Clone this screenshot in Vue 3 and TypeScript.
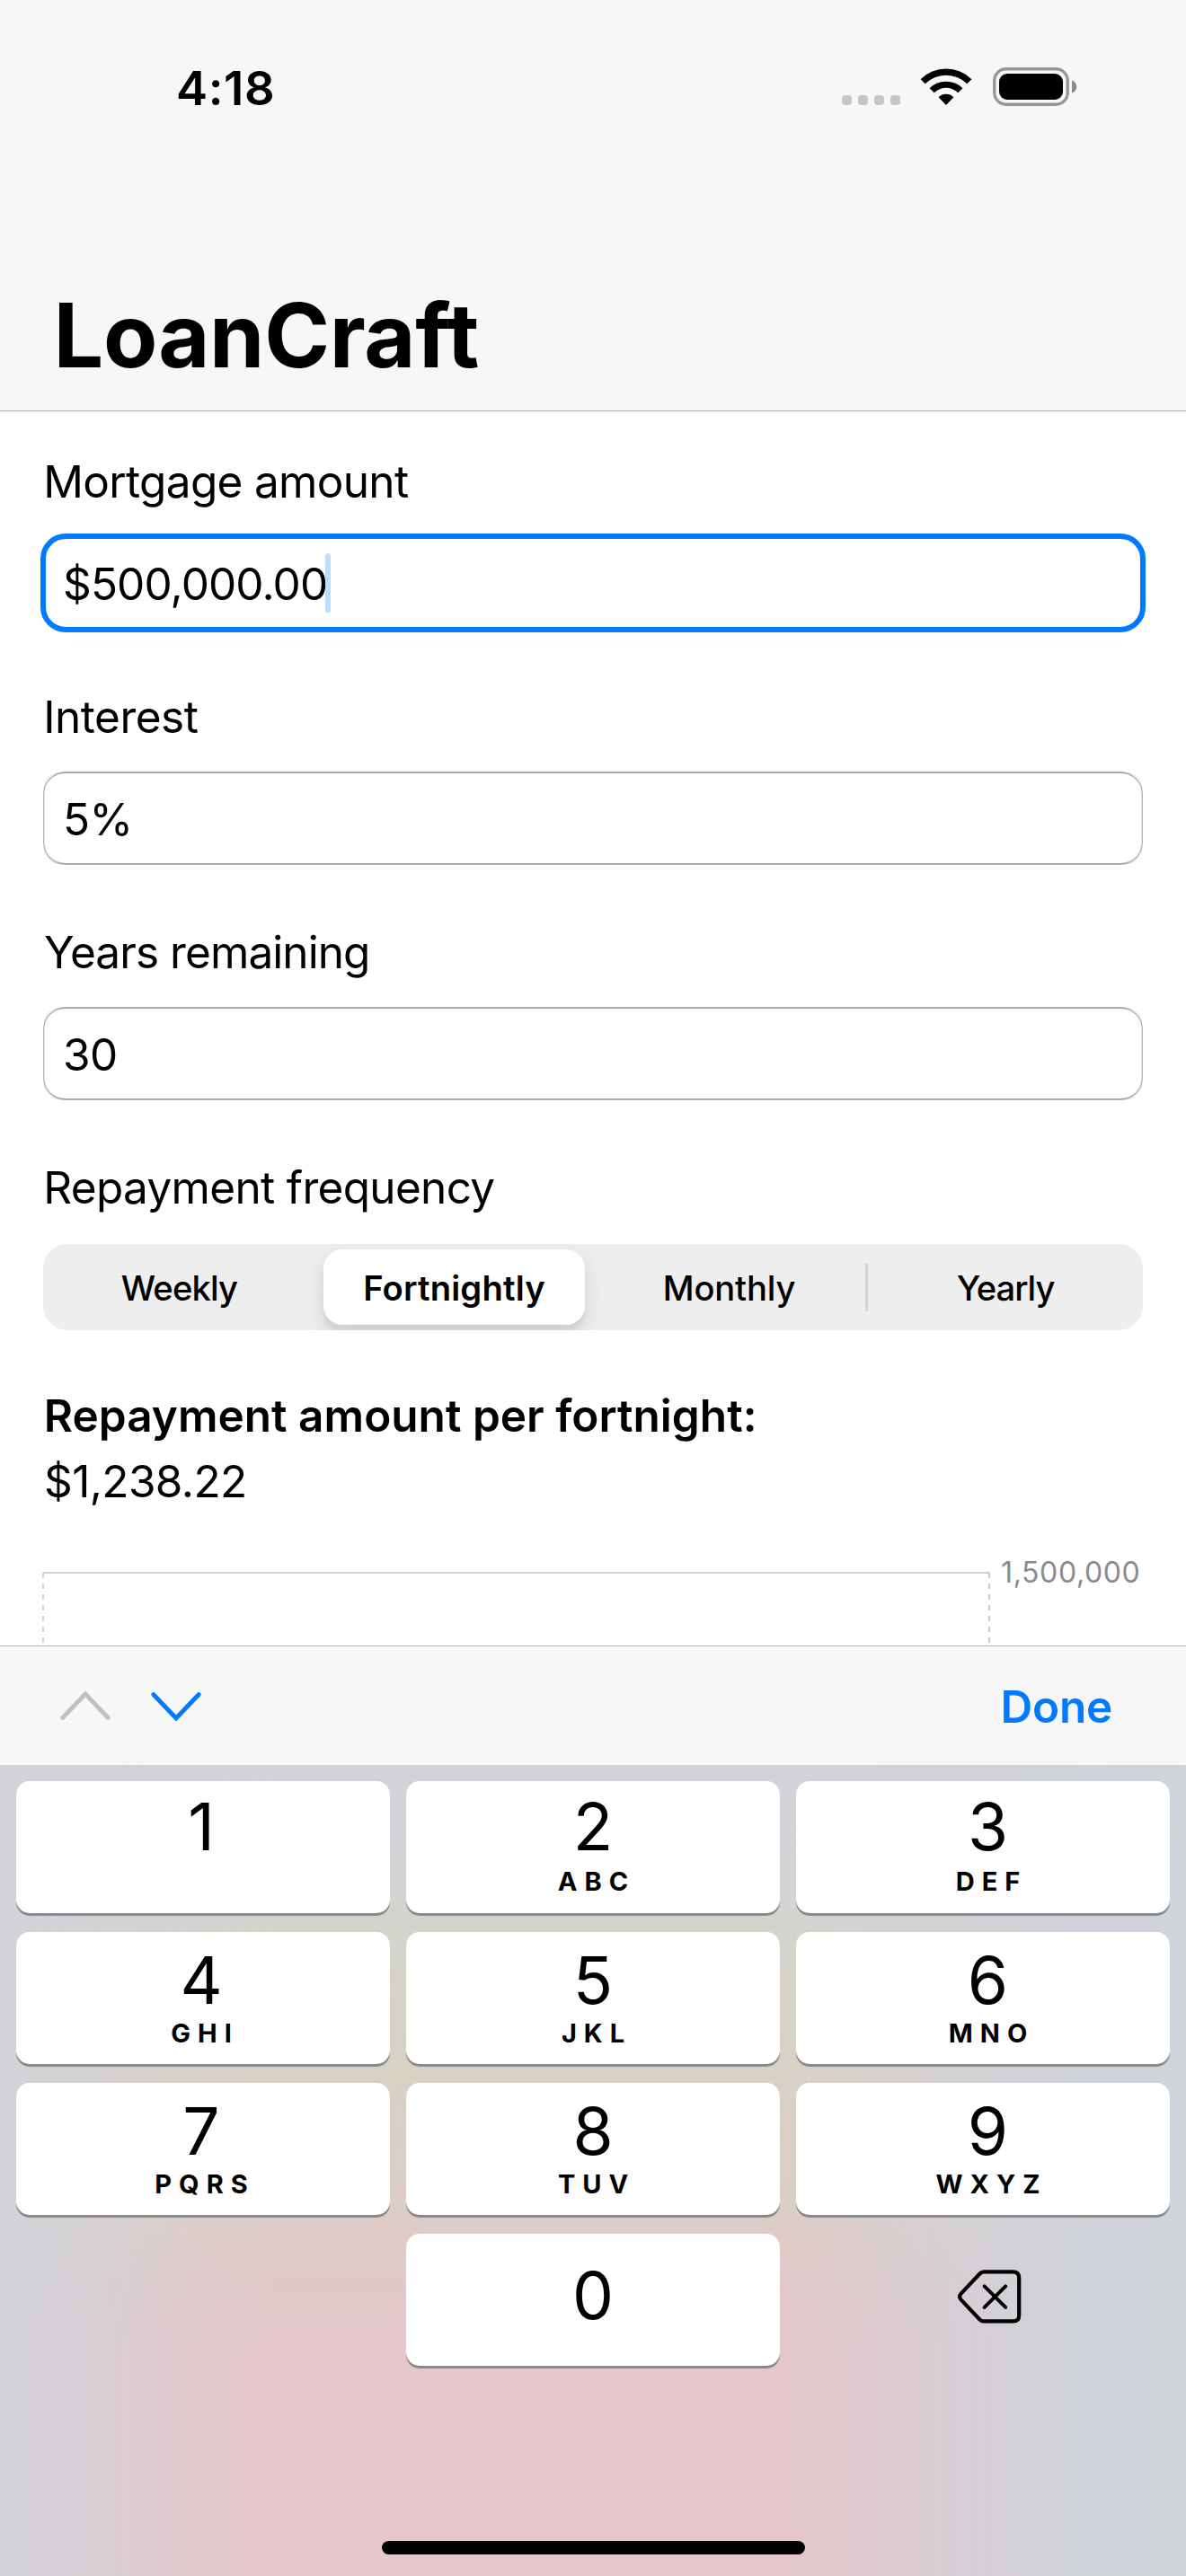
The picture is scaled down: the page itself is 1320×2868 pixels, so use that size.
<script setup lang="ts">
interface Field {
  id: string
  label: string
  value: string
  focused: boolean
}

interface Key {
  digit: string
  letters: string
}

const fields: Field[] = [
  { id: 'amount', label: 'Mortgage amount', value: '$500,000.00', focused: true },
  { id: 'interest', label: 'Interest', value: '5%', focused: false },
  { id: 'years', label: 'Years remaining', value: '30', focused: false },
]

const frequencies: string[] = ['Weekly', 'Fortnightly', 'Monthly', 'Yearly']
const selected = 'Fortnightly'

const keys: Key[] = [
  { digit: '1', letters: '' },
  { digit: '2', letters: 'ABC' },
  { digit: '3', letters: 'DEF' },
  { digit: '4', letters: 'GHI' },
  { digit: '5', letters: 'JKL' },
  { digit: '6', letters: 'MNO' },
  { digit: '7', letters: 'PQRS' },
  { digit: '8', letters: 'TUV' },
  { digit: '9', letters: 'WXYZ' },
]
</script>

<template>
  <div class="screen">
    <header class="header">
      <div class="status">
        <span class="time">4:18</span>
        <div class="indicators">
          <div class="dots"><i v-for="n in 4" :key="n"></i></div>
          <svg class="wifi" width="58" height="43" viewBox="0 0 58 43">
            <path d="M0.6 13.2 A40.5 40.5 0 0 1 57.4 13.2 L52.4 18.3 A33.2 33.2 0 0 0 5.6 18.3 Z" />
            <path d="M10.6 23.2 A26.2 26.2 0 0 1 47.4 23.2 L42.3 28.3 A19 19 0 0 0 15.7 28.3 Z" />
            <path d="M20.6 33.3 A12 12 0 0 1 37.4 33.3 L29 42 Z" />
          </svg>
          <svg class="battery" width="94" height="44" viewBox="0 0 94 44">
            <rect x="1.75" y="1.75" width="81.5" height="39.5" rx="13" fill="none" stroke="#969696" stroke-width="3.3" />
            <rect x="7" y="7" width="71" height="29" rx="9" />
            <path d="M88 14.5 C91.5 15.5 93.2 18.5 93.2 21.6 C93.2 24.8 91.5 27.6 88 28.6 Z" fill="#8a8a8a" />
          </svg>
        </div>
      </div>
      <h1 class="title">LoanCraft</h1>
    </header>

    <main class="content">
      <section v-for="f in fields" :key="f.id" class="group" :class="f.id">
        <label class="label">{{ f.label }}</label>
        <div class="field" :class="{ focused: f.focused }">
          <span class="value">{{ f.value }}</span>
          <span v-if="f.focused" class="caret"></span>
        </div>
      </section>

      <section class="frequency">
        <div class="label">Repayment frequency</div>
        <div class="segmented">
          <div
            v-for="q in frequencies"
            :key="q"
            class="segment"
            :class="[q.toLowerCase(), { selected: q === selected }]"
          >
            <span>{{ q }}</span>
          </div>
        </div>
      </section>

      <section class="result">
        <div class="result-title">Repayment amount per fortnight:</div>
        <div class="result-value">$1,238.22</div>
      </section>

      <section class="chart">
        <svg width="1056" height="82" viewBox="0 0 1056 82">
          <path d="M1 1 H1054" stroke="#d0d0d0" stroke-width="2" />
          <path d="M1 1 V79" stroke="#c8c8c8" stroke-width="1.6" stroke-dasharray="6 6" />
          <path d="M1054 1 V79" stroke="#c8c8c8" stroke-width="2" stroke-dasharray="6 6" />
        </svg>
        <span class="axis">1,500,000</span>
      </section>
    </main>

    <div class="toolbar">
      <div class="arrows">
        <svg width="58" height="36" viewBox="0 0 58 36" fill="none" stroke="#c1c1c1" stroke-width="4.8" stroke-linecap="round">
          <path d="M3.7 31.5 L29 5 L54.3 31.5" />
        </svg>
        <svg width="58" height="36" viewBox="0 0 58 36" fill="none" stroke="#007aff" stroke-width="4.8" stroke-linecap="round">
          <path d="M3.7 5.5 L29 32 L54.3 5.5" />
        </svg>
      </div>
      <span class="done">Done</span>
    </div>

    <div class="keyboard">
      <div class="glow"></div>
      <div class="keys">
        <div v-for="k in keys" :key="k.digit" class="key" :class="{ first: k.digit < '4' }">
          <span class="digit">{{ k.digit }}</span>
          <span class="letters">{{ k.letters }}</span>
        </div>
        <div></div>
        <div class="key zero"><span class="digit">0</span></div>
        <div class="delete">
          <svg width="72" height="62" viewBox="0 0 72 62" fill="none" stroke="#000" stroke-linecap="round" stroke-linejoin="round">
            <path
              d="M30 3.4 H62.5 Q69.2 3.4 69.2 10 V52 Q69.2 58.4 62.5 58.4 H30 Q27.3 58.4 25.2 56.2 L4.6 34.4 Q1.6 31 4.6 27.6 L25.2 5.7 Q27.3 3.4 30 3.4 Z"
              stroke-width="4.2"
            />
            <path d="M30.6 19.3 L54.2 42.8 M54.2 19.3 L30.6 42.8" stroke-width="4" />
          </svg>
        </div>
      </div>
      <div class="home"></div>
    </div>
  </div>
</template>

<style>
body {
  background: #fff;
}
</style>

<style scoped>
.screen {
  width: 1320px;
  height: 2868px;
  overflow: hidden;
  display: flex;
  flex-direction: column;
  background: #fff;
  color: #000;
  font-family: Inter, 'Liberation Sans', sans-serif;
  font-size: 49.5px;
  white-space: nowrap;
}
.screen * {
  box-sizing: border-box;
}

/* Header */
.header {
  height: 458px;
  flex: none;
  background: #f7f7f7;
  border-bottom: 1px solid #b2b2b2;
}
.status {
  height: 196px;
  padding: 0 121px 0 196px;
  display: flex;
  align-items: center;
  justify-content: space-between;
}
.time {
  font-size: 52.7px;
  font-weight: 600;
  letter-spacing: 0.6px;
  line-height: 60px;
}
.indicators {
  display: flex;
  align-items: flex-start;
  height: 46px;
}
.dots {
  display: flex;
  gap: 7px;
  margin: 31px 22px 0 0;
}
.dots i {
  width: 11px;
  height: 11px;
  border-radius: 4px;
  background: #c6c6c6;
}
.wifi {
  margin-right: 23px;
}
.title {
  margin: 117px 0 0 59.6px;
  font-size: 98.6px;
  font-weight: 700;
  line-height: 120px;
  letter-spacing: -0.3px;
}

/* Form */
.content {
  height: 1374px;
  flex: none;
  padding: 48px 48px 0;
  overflow: hidden;
}
.label {
  display: block;
  height: 60px;
  line-height: 60px;
  margin-left: 0.3px;
  letter-spacing: -0.68px;
}
.interest .label {
  letter-spacing: -0.5px;
}
.years .label {
  margin-left: 1px;
  letter-spacing: -0.92px;
}
.field {
  position: relative;
  height: 104px;
  margin: 31px 0 67px;
  padding: 2px 0 0 21px;
  border-style: solid;
  border-color: #b3b3b5;
  border-width: 2px 1px;
  border-radius: 25px;
  display: flex;
  align-items: center;
}
.field:not(.focused)::before {
  content: '';
  position: absolute;
  inset: -1px 0;
  border: 1px solid rgba(0, 0, 0, 0.1);
  border-radius: 17px;
}
.field.focused {
  height: 110px;
  margin: 28px -3px 64px;
  padding-left: 19px;
  border: 6px solid #007aff;
  border-radius: 28px;
}
.value {
  line-height: 60px;
  letter-spacing: -0.5px;
}
.focused .value {
  letter-spacing: -0.88px;
}
.caret {
  width: 6px;
  height: 66px;
  margin: -3px 0 0 -2px;
  border-radius: 3px;
  background: #bdddff;
}
.segmented {
  height: 96px;
  margin-top: 33px;
  border-radius: 27px;
  background: #eeeeef;
  display: grid;
  grid-template-columns: repeat(4, 1fr);
  overflow: hidden;
}
.segment {
  padding: 0 3px 0 0;
  display: flex;
  align-items: center;
  justify-content: center;
  font-size: 38.2px;
  line-height: 50px;
  font-weight: 450;
  letter-spacing: -0.2px;
}
.segment span {
  padding-top: 1px;
}
.segment.weekly {
  letter-spacing: -0.85px;
}
.segment.selected {
  margin: 6px 9px 6px 6px;
  padding: 0;
  border-radius: 21px;
  background: #fff;
  font-weight: 600;
  letter-spacing: 0.17px;
  box-shadow: 0 9px 24px rgba(0, 0, 0, 0.12), 0 9px 3px rgba(0, 0, 0, 0.04);
}
.segment.yearly {
  position: relative;
  padding: 0;
  letter-spacing: -1.04px;
}
.segment.yearly::before {
  content: '';
  position: absolute;
  left: -3px;
  top: 21px;
  width: 3px;
  height: 54px;
  border-radius: 2px;
  background: #d5d5d6;
}
.result {
  padding-top: 65px;
}
.result-title {
  height: 60px;
  line-height: 60px;
  margin-left: 0.8px;
  font-weight: 600;
  letter-spacing: 0.02px;
}
.result-value {
  height: 60px;
  line-height: 60px;
  margin: 13px 0 0 1px;
  letter-spacing: -0.61px;
}
.chart {
  margin-top: 71px;
  display: flex;
  align-items: flex-start;
}
.chart svg {
  flex: none;
  margin-left: -1px;
}
.axis {
  margin: -19px 0 0 11px;
  font-size: 32px;
  line-height: 40px;
  letter-spacing: 0.62px;
  color: #8a8a8e;
}

/* Keyboard accessory bar */
.toolbar {
  height: 133px;
  flex: none;
  padding: 0 82px 0 66px;
  background: #f7f7f7;
  border-top: 1px solid #b2b2b2;
  display: flex;
  align-items: center;
  justify-content: space-between;
}
.arrows {
  display: flex;
  gap: 43px;
}
.done {
  padding-top: 1px;
  line-height: 60px;
  font-weight: 600;
  letter-spacing: -0.22px;
  color: #007aff;
}

/* Keyboard */
.keyboard {
  position: relative;
  flex: 1;
  padding: 18px;
  background: linear-gradient(90deg, #d2d4d9, #d2d2d9 70%, #d1d3d9 85%, #cfd4d9);
  overflow: hidden;
}
.glow {
  position: absolute;
  inset: 0;
  background: linear-gradient(
    180deg,
    #d2d2d8 0,
    #d3d3d6 110px,
    #d4d4cd 185px,
    #d6d3c6 265px,
    #d9d1c5 345px,
    #dbcfc6 440px,
    #deccc6 520px,
    #e1c8c8 580px,
    #e5c6ca 650px
  );
  mask-image: linear-gradient(
    90deg,
    rgba(0, 0, 0, 0.1) 0,
    rgba(0, 0, 0, 0.22) 80px,
    rgba(0, 0, 0, 0.6) 165px,
    rgba(0, 0, 0, 0.9) 240px,
    #000 310px,
    #000 870px,
    rgba(0, 0, 0, 0.7) 960px,
    rgba(0, 0, 0, 0.3) 1060px,
    transparent 1200px
  );
}
.keys {
  position: relative;
  display: grid;
  grid-template-columns: repeat(3, 416px);
  grid-auto-rows: 147px;
  gap: 21px 18px;
}
.key {
  padding-top: 18px;
  border-radius: 15px;
  background: #fff;
  box-shadow: 0 3px 0 #8a898b;
  display: flex;
  flex-direction: column;
  align-items: center;
}
.key:nth-child(3n + 1) {
  padding-right: 4px;
}
.key:nth-child(3n) {
  padding-left: 11px;
}
.key.first {
  padding-top: 15px;
}
.digit {
  font-size: 73px;
  line-height: 72px;
  height: 72px;
}
.letters {
  margin-top: 7px;
  padding-left: 8px;
  font-size: 29px;
  line-height: 32px;
  font-weight: 650;
  letter-spacing: 8px;
}
.first .letters {
  margin-top: 9px;
}
.key.zero {
  padding-top: 33px;
}
.delete {
  padding: 39px 0 0 179px;
}
.home {
  position: absolute;
  left: 425px;
  bottom: 24px;
  width: 471px;
  height: 15px;
  border-radius: 8px;
  background: #000;
}
</style>
